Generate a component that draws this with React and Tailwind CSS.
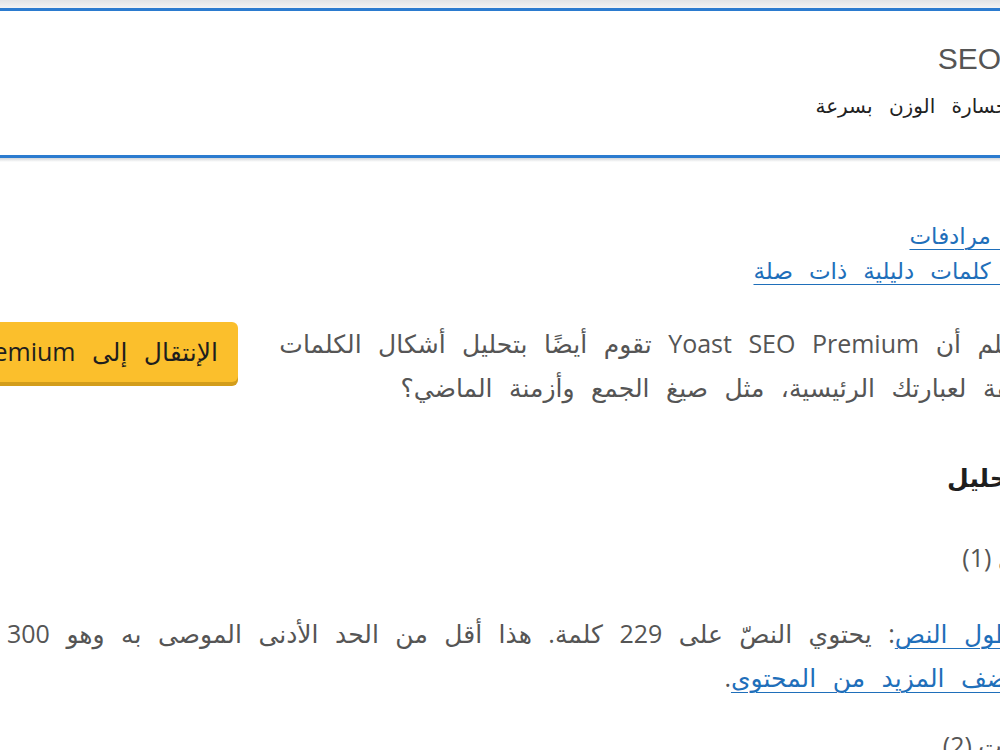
import React from 'react';

const linkClass = 'text-[#1f6fba] underline underline-offset-[5px] decoration-[1px]';

function SnippetPreview() {
  return (
    <div>
      <div className="h-[8px] bg-gradient-to-b from-[#e1e3e5] to-[#f2f3f4]" />
      <div className="h-[150px] border-t-[3px] border-b-[3px] border-[#2b7bcf] bg-white">
        <div className="pt-[30px] pr-[79px] text-[30px] leading-[36px] text-[#555] font-['Liberation_Sans','DejaVu_Sans',sans-serif]">
          SEO
        </div>
        <div className="mt-[17px] pr-[72px] text-[20px] leading-[24px] text-[#222] [word-spacing:10px] font-['DejaVu_Sans',sans-serif]">
          خسارة الوزن بسرعة
        </div>
      </div>
      <div className="h-[4px] bg-gradient-to-b from-[#d3d6d9] to-white" />
    </div>
  );
}

function ResultItem({ children }) {
  return (
    <div className="flex items-start gap-[26px] pr-[27px]">
      <span className="mt-[16px] h-[12px] w-[12px] shrink-0 rounded-full bg-[#dc3232]" />
      <p className="flex-1 text-[25px] leading-[44px] text-[#555] [word-spacing:10px]">{children}</p>
    </div>
  );
}

export default function App() {
  return (
    <div className="h-[750px] w-[1000px] overflow-hidden bg-white font-['Open_Sans','DejaVu_Sans',sans-serif]">
      <div dir="rtl" className="-ml-[80px] w-[1160px]">
        <SnippetPreview />

        <div className="mt-[56px] flex flex-col items-start pr-[17px] text-[23px] leading-[35px] [word-spacing:10px]">
          <a href="#" className={linkClass}>إضافة مرادفات</a>
          <a href="#" className={linkClass}>إضافة كلمات دليلية ذات صلة</a>
        </div>

        <div className="mt-[33px] flex items-start gap-[38px] pr-[10px]">
          <p className="w-[794px] shrink-0 text-[25px] leading-[44px] text-[#555] [word-spacing:10px]">
            هل تعلم أن Yoast SEO Premium تقوم أيضًا بتحليل أشكال الكلمات المختلفة لعبارتك الرئيسية، مثل صيغ الجمع وأزمنة الماضي؟
          </p>
          <button
            type="button"
            className="mt-[1px] h-[60px] shrink-0 whitespace-nowrap rounded-[6px] bg-[#fbbf2c] px-[20px] text-[25px] text-[#1e1e1e] shadow-[0_4px_0_#d39d1b] [word-spacing:10px]"
          >
            الإنتقال إلى Premium
          </button>
        </div>

        <h3 className="mt-[53px] pr-[44px] text-[25px] font-bold leading-[30px] text-[#1e1e1e]">التحليل</h3>

        <div className="mt-[50px] pr-[8px] text-[25px] leading-[30px] text-[#555]">مشاكل (1)</div>

        <div className="mt-[39px]">
          <ResultItem>
            <a href="#" className={linkClass}>طول النص</a>: يحتوي النصّ على 229 كلمة. هذا أقل من الحد الأدنى الموصى به وهو 300 كلمة.{' '}
            <a href="#" className={linkClass}>أضف المزيد من المحتوى</a>.
          </ResultItem>
        </div>

        <div className="mt-[31px] pr-[10px] text-[25px] leading-[30px] text-[#555]">تحسينات (2)</div>
      </div>
    </div>
  );
}
